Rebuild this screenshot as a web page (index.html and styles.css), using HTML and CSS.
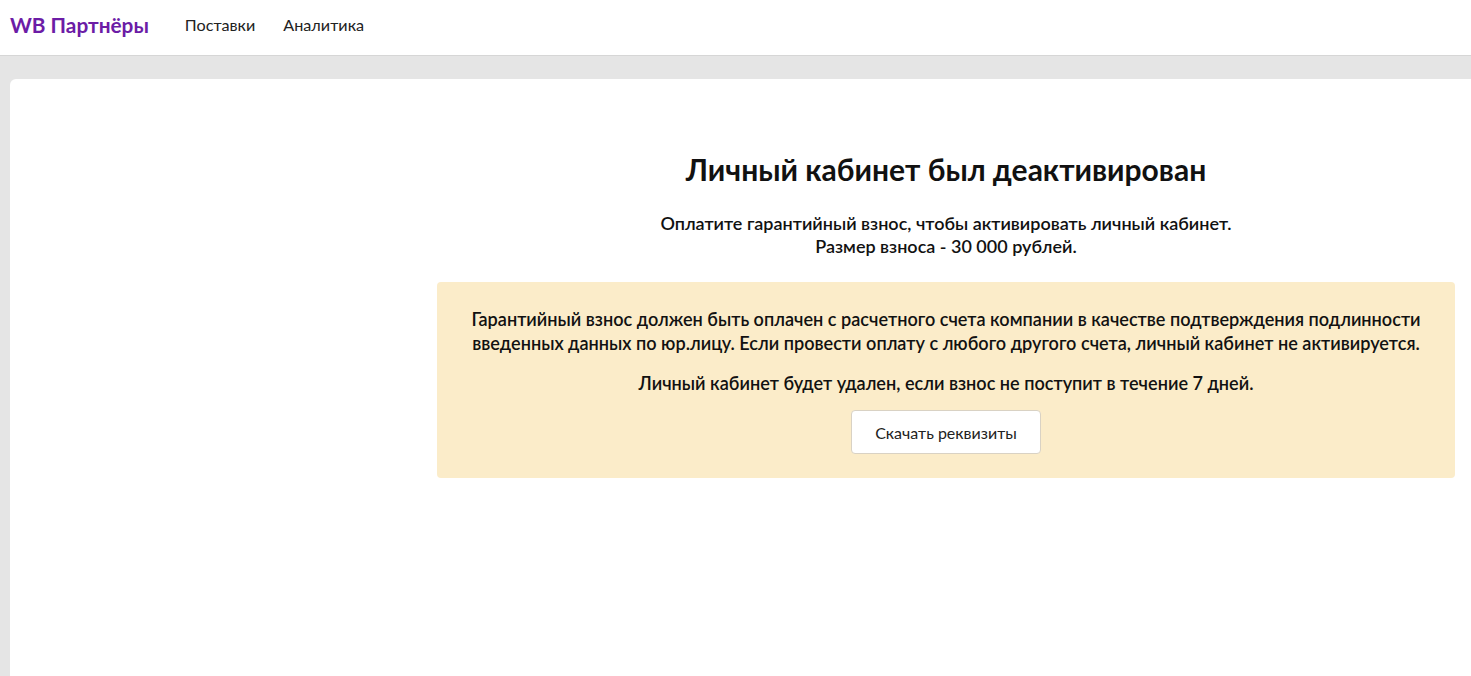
FILE: index.html
```html
<!DOCTYPE html>
<html lang="ru">
<head>
<meta charset="utf-8">
<title>WB Партнёры</title>
<link rel="stylesheet" href="styles.css">
</head>
<body>
<header class="header">
  <div class="logo">WB Партнёры</div>
  <nav class="nav">
    <a class="nav-link" href="#">Поставки</a>
    <a class="nav-link" href="#">Аналитика</a>
  </nav>
</header>
<main class="page">
  <section class="card">
    <div class="sidebar"></div>
    <div class="content">
      <h1 class="title">Личный кабинет был деактивирован</h1>
      <p class="subtitle">Оплатите гарантийный взнос, чтобы активировать личный кабинет.<br>Размер взноса - 30 000 рублей.</p>
      <div class="notice">
        <p class="notice-text">Гарантийный взнос должен быть оплачен с расчетного счета компании в качестве подтверждения подлинности<br>введенных данных по юр.лицу. Если провести оплату с любого другого счета, личный кабинет не активируется.</p>
        <p class="notice-text notice-warn">Личный кабинет будет удален, если взнос не поступит в течение 7 дней.</p>
        <button class="btn" type="button">Скачать реквизиты</button>
      </div>
    </div>
  </section>
</main>
</body>
</html>
```
FILE: styles.css
```css
* { box-sizing: border-box; }
html, body { margin: 0; padding: 0; }
body {
  font-family: Lato, "Open Sans", "Liberation Sans", sans-serif;
  color: #111;
  background: #e5e5e5;
  overflow: hidden;
  height: 676px;
}
.header {
  height: 56px;
  background: #fff;
  border-bottom: 1px solid #d6d6d6;
  display: flex;
  align-items: center;
  padding: 0 10px;
}
.logo {
  font-size: 20.8px;
  font-weight: 700;
  color: #6c1ca6;
  margin-right: 36px;
  padding-bottom: 6px;
}
.nav { display: flex; gap: 28px; padding-bottom: 7px; }
.nav-link {
  font-size: 16.2px;
  color: #222;
  text-decoration: none;
}
.page {
  padding: 23px 0 0 10px;
}
.card {
  background: #fff;
  border-radius: 6px 0 0 0;
  height: 597px;
  display: flex;
}
.sidebar { width: 427px; flex: none; }
.content {
  width: 1018px;
  flex: none;
  padding-top: 70px;
  text-align: center;
}
.title {
  margin: 0;
  font-size: 30px;
  font-weight: 700;
  line-height: 40px;
  color: #111;
}
.subtitle {
  margin: 23px 0 0;
  font-size: 18px;
  font-weight: 600;
  line-height: 23px;
  color: #111;
}
.notice {
  margin-top: 24px;
  background: #fbecc9;
  border-radius: 4px;
  padding: 25px 20px 24px;
}
.notice-text {
  margin: 0;
  font-size: 18.1px;
  font-weight: 600;
  line-height: 24px;
  color: #111;
}
.notice-warn { margin-top: 16px; }
.btn {
  margin-top: 15px;
  width: 190px;
  height: 44px;
  background: #fff;
  border: 1px solid #d9d2c4;
  border-radius: 4px;
  font-family: Lato, "Open Sans", "Liberation Sans", sans-serif;
  font-size: 16px;
  color: #222;
}
```
